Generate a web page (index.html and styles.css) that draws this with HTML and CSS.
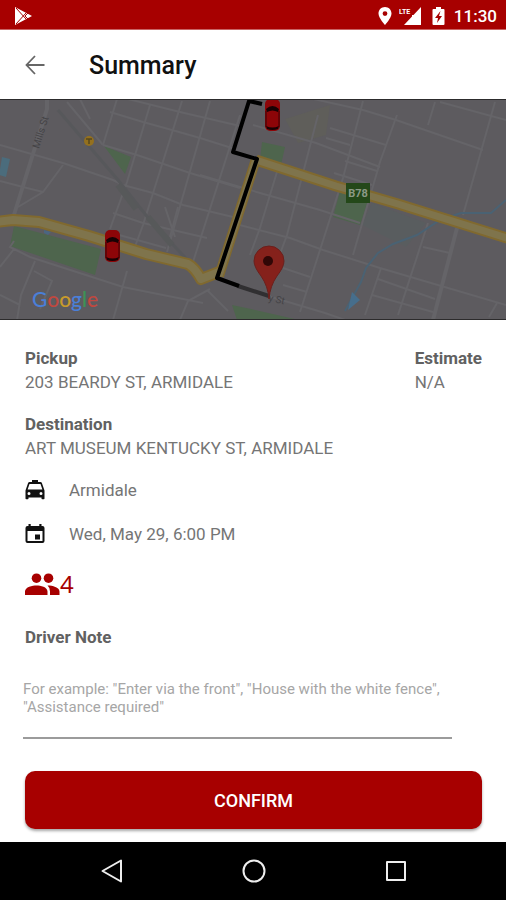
FILE: index.html
```
<!DOCTYPE html>
<html lang="en">

<head>
  <meta charset="UTF-8">
  <meta name="viewport" content="width=device-width, initial-scale=1.0">
  <title>Summary</title>
  <link rel="stylesheet" href="styles.css">
</head>

<body>
  <div class="status-bar">
    <svg width="20" height="20" viewBox="0 0 20 20">
      <path d="M1 1l17 9-17 9z" fill="#fff" />
      <path d="M2 2l10 11M2 18L12 7M14 7l-3 3 3 3" fill="none" stroke="#a70000" stroke-width="1" />
    </svg>
    <div class="status-icons">
      <svg width="14" height="20" viewBox="0 0 14 20">
        <path d="M7 1C3.400 1 .5 3.800 .5 7.500 .5 12 7 19 7 19s6.500-7 6.500-11.500C13.500 3.800 10.600 1 7 1zm0 9a2.400 2.400 0 1 1 0-4.800A2.400 2.400 0 0 1 7 10z" fill="#fff" />
      </svg>
      <svg class="signal" width="23" height="20" viewBox="0 0 23 20">
        <path d="M22 1v18H5l8-8.500V9h1.500z" fill="#fff" />
        <text x="0" y="8" class="lte">LTE</text>
      </svg>
      <svg class="battery" width="13" height="20" viewBox="0 0 13 20">
        <path d="M4 1h5v2h2.500a1 1 0 0 1 1 1v14a1 1 0 0 1-1 1h-10a1 1 0 0 1-1-1V4a1 1 0 0 1 1-1H4z" fill="#fff" />
        <path d="M8.500 5L3 12h3l-1 5 5-7H7z" fill="#a70000" />
      </svg>
      <span class="clock">11:30</span>
    </div>
  </div>

  <header class="app-bar">
    <button class="back-btn" type="button" aria-label="Back">
      <svg width="20" height="20" viewBox="0 0 20 20">
        <path d="M19.500 10H2M10 1L1.500 10l8.500 9" fill="none" stroke="#666" stroke-width="1.800" />
      </svg>
    </button>
    <h1>Summary</h1>
  </header>

  <svg class="map" viewBox="0 0 506 221" role="img" aria-label="Trip route">
    <rect width="506" height="221" fill="#5d5b5f" />

    <!-- parks and water -->
    <g fill="#4e654d">
      <path d="M14 127l87 23-6 26-85-29z" />
      <path d="M104 47l27 11-6 17z" />
      <path d="M262 43l23 5-4 18-21-5z" />
      <path d="M340 92l28 10-8 24-27-8z" />
      <path d="M232 206l19 4 48 11h-62z" />
    </g>
    <path d="M285 20l45-14-4 30-28 8z" fill="#5f5e5a" />
    <path d="M372 104l54 20-20 24-44-22z" fill="#595d5f" />
    <path d="M2 58l8 2-4 18-7-2z" fill="#4b6c7c" />
    <path d="M44 131l7 2-3 3-4-2z" fill="#4b6681" />

    <!-- side streets, west -->
    <g fill="none" stroke="#656468" stroke-width="2">
      <path d="M47 0v10L13 119" stroke-width="4" />
      <path d="M0 46l63 18 50 17 10 5 30 8 30 12 50 12" />
      <path d="M63 66L43 93l-25 15M0 82l23 6 20 5M67 3l36 43" />
      <path d="M80 0l10 20M110 13l33 10 29 8 28 8 35 11M103 46l34 10 53 18 30 9 20 6M120-2l60 15 60 14" />
      <path d="M113 114l30 10 64 15M112 134l54 15" />
      <path d="M117 0l-14 46M150 6l-23 77-17 47M182 2l-39 124-10 27M210 2l-43 151M240 16l-47 147" />
      <path d="M165 108l10 30M178 108l-8 30" />
      <path d="M14 142l-4 6 20 10 93 30 80 16M14 150L0 168M35 162l-14 34-4 25M34 172l18 10-12 28M0 196l20 10M127 172l-14 49M210 190l-22 12-8 19M208 192l20 20" />
    </g>

    <!-- side streets, east -->
    <g fill="none" stroke="#656468" stroke-width="2">
      <path d="M200 76l60 18 60 17 40 13M232 124l58 15 33 12 57 18 126 37M283 169l27 9M283 186l24 7M268 197l57 17 20 7" />
      <path d="M280 63l-20 66-10 27M318 16l-31 120-10 27M363 2l-20 77-23 72-20 62M397 16l-17 47-27 93" />
      <path d="M253 26l63 18 64 24M330 29l56 17M326 39l24 7M300-3l63 14 33 10 87 30M345 62l32 10M334 74l38 12" />
      <path d="M435 3l-7 23M440 3l66 18M495 3l-32 113M428 124l-30 92M423 148l27 6M381 169l-16 47M378 180l57 20M372 196l61 17M497 204l-8 14" />
      <path d="M457 129l-24 92" stroke-width="4" />
    </g>

    <!-- railway -->
    <path d="M58 11l60 70 35 44 50 52" fill="none" stroke="#57585b" stroke-width="3" />
    <path d="M118 86l18 24M148 118l24 28" fill="none" stroke="#57595a" stroke-width="6" />

    <!-- creek -->
    <path d="M506 101l-15 13h-30l-21 7-23 15-24 9-15 9-12 15-5 14-16 29" fill="none" stroke="#4a6273" stroke-width="2" />
    <path d="M352 193l-4 18 12-10z" fill="#466e8c" />

    <!-- main roads -->
    <g fill="none" stroke-linejoin="round">
      <path d="M-4 123l17-2 26 2 50 14 57 18 42 10q7 4 13 15l18-7" stroke="#80692f" stroke-width="12" />
      <path d="M256 60l-37 117" stroke="#80692f" stroke-width="10" />
      <path d="M256 61l80 26 62 18 112 35" stroke="#80692f" stroke-width="11" />
      <path d="M-4 123l17-2 26 2 50 14 57 18 42 10q7 4 13 15l18-7" stroke="#7f744c" stroke-width="8" />
      <path d="M256 60l-37 117" stroke="#7f744c" stroke-width="7" />
      <path d="M256 61l80 26 62 18 112 35" stroke="#7f744c" stroke-width="7" />
    </g>

    <!-- route -->
    <g fill="none" stroke-linejoin="round">
      <path d="M238 187l31 10" stroke="#302f31" stroke-width="4" />
      <path d="M262 5l-13-3-16 51 24 7-40 119 22 8" stroke="#000" stroke-width="4" />
    </g>

    <text class="street" transform="translate(39 50) rotate(-73)">Mills St</text>
    <text class="street" x="268" y="202" transform="rotate(12 268 202)">y St</text>

    <circle cx="89" cy="42" r="5" fill="#94701e" />
    <path d="M86 40h6M89 40v5" stroke="#57481f" stroke-width="1.500" />

    <rect x="346" y="84" width="24" height="20" fill="#244819" />
    <text class="shield" x="358" y="98">B78</text>

    <g id="car">
      <rect x="105" y="131" width="15" height="32" rx="5" fill="#8d0508" />
      <path d="M106 141q6.500-6 13 0l-1 3q-5.500-3-11 0zM106 158q6.500 3 13 0l-1 3q-5.500 2-11 0z" fill="#170204" />
      <path d="M106 143v16M119 143v16" stroke="#3d0305" />
    </g>
    <use href="#car" x="160" y="-131" />

    <path d="M269 200q-1-13-8-23-7-9-7-15a15 15 0 0 1 30 0q0 6-7 15-7 10-8 23z" fill="#85211b" stroke="#6b201c" />
    <circle cx="268" cy="162" r="5" fill="#300706" />

    <text class="logo" x="32" y="208"><tspan fill="#4a7fd8">G</tspan><tspan fill="#c04840">o</tspan><tspan fill="#c99b2b">o</tspan><tspan fill="#4a7fd8">g</tspan><tspan fill="#3d9355">l</tspan><tspan fill="#c04840">e</tspan></text>
    <path d="M0 .5h506M0 220.500h506" stroke="#2c2b2c" />
  </svg>

  <main class="details">
    <div class="trip-row">
      <div>
        <h2>Pickup</h2>
        <p>203 BEARDY ST, ARMIDALE</p>
      </div>
      <div class="estimate">
        <h2>Estimate</h2>
        <p>N/A</p>
      </div>
    </div>

    <div class="destination">
      <h2>Destination</h2>
      <p>ART MUSEUM KENTUCKY ST, ARMIDALE</p>
    </div>

    <div class="info-row">
      <svg width="20" height="20" viewBox="0 0 20 20">
        <path fill-rule="evenodd" d="M7 0h6v2h2.500q1 0 1.400 1L19.500 10.500v8q0 .8-.8.800h-1.400q-.8 0-.8-.8v-1h-13v1q0 .8-.8.800H1.300q-.8 0-.8-.8v-8L3.100 3q.4-1 1.400-1H7zM4.500 4L2.600 9.500h14.800L15.500 4zM4 12a1.500 1.500 0 1 0 0 3 1.500 1.500 0 0 0 0-3zm12 0a1.500 1.500 0 1 0 0 3 1.500 1.500 0 0 0 0-3z" />
      </svg>
      <span>Armidale</span>
    </div>
    <div class="info-row">
      <svg width="20" height="20" viewBox="0 0 20 20">
        <path fill-rule="evenodd" d="M3.500 0h2.200v2h8.600V0h2.200v2H17.500q2 0 2 2v13q0 2-2 2h-15q-2 0-2-2V4q0-2 2-2h1zM2.500 7v10h15V7zM10 10.500h5V15.500H10z" />
      </svg>
      <span>Wed, May 29, 6:00 PM</span>
    </div>

    <div class="passengers">
      <svg width="35" height="22" viewBox="0 0 35 22" fill="#a70000">
        <circle cx="11.500" cy="5.200" r="4.800" />
        <circle cx="23.500" cy="5.200" r="4.800" />
        <path d="M0 22v-3.500C0 14 7.500 12.500 11.500 12.500S22.500 14 22.500 18.500V22zM22.500 12.600C27 12.500 34.500 14.500 34.500 18.500V22H25v-3.500q0-3.800-2.500-5.900z" />
      </svg>
      <span>4</span>
    </div>

    <label for="note">Driver Note</label>
    <textarea id="note" rows="2" placeholder='For example: "Enter via the front", "House with the white fence", "Assistance required"'></textarea>

    <button class="confirm-btn" type="button">CONFIRM</button>
  </main>

  <nav class="nav-bar">
    <button type="button" aria-label="Back">
      <svg width="24" height="24" viewBox="0 0 24 24"><path d="M21 1.500v21L2.500 12z" /></svg>
    </button>
    <button type="button" aria-label="Home">
      <svg width="24" height="24" viewBox="0 0 24 24"><circle cx="12" cy="12" r="10.500" /></svg>
    </button>
    <button type="button" aria-label="Recent apps">
      <svg width="24" height="24" viewBox="0 0 24 24"><rect x="3" y="3" width="18" height="18" /></svg>
    </button>
  </nav>
</body>

</html>
```
FILE: styles.css
```
* {
  box-sizing: border-box;
}

body {
  font-family: Roboto, sans-serif;
  display: flex;
  flex-direction: column;
  min-height: 100vh;
  margin: 0;
  background-color: #ffffff;
  color: #757575;
}

h1,
h2,
p {
  margin: 0;
}

svg {
  display: block;
}

button {
  font-family: inherit;
  border: none;
  cursor: pointer;
}

.status-bar {
  display: flex;
  justify-content: space-between;
  align-items: center;
  height: 30px;
  padding: 2px 9px 0 14px;
  background-color: #a70000;
  border-bottom: 1px solid #c86464;
}

.status-icons {
  display: flex;
  align-items: center;
}

.signal {
  margin-left: 7px;
}

.battery {
  margin: 0 9px 0 10px;
}

.lte {
  font-size: 7px;
  font-weight: 700;
  fill: #ffffff;
}

.clock {
  font-size: 17px;
  font-weight: 500;
  color: #ffffff;
}

.app-bar {
  display: flex;
  align-items: center;
  gap: 44px;
  height: 69px;
  padding: 2px 25px 0;
}

.back-btn {
  padding: 0 0 2px;
  background: none;
}

.app-bar h1 {
  font-size: 25px;
  font-weight: 500;
  color: #111111;
}

.map {
  width: 100%;
  height: auto;
}

.street {
  font-size: 10px;
  fill: #444346;
}

.shield {
  font-size: 11px;
  font-weight: 700;
  fill: #8c9a86;
  text-anchor: middle;
}

.logo {
  font-family: Lato, sans-serif;
  font-size: 21px;
  font-weight: 500;
}

.details {
  display: flex;
  flex-direction: column;
  flex: 1;
  padding: 26px 24px 13px 25px;
  font-size: 17px;
  line-height: 24px;
}

.details h2,
.details label {
  font-size: 17px;
  font-weight: 700;
  color: #616161;
}

.trip-row {
  display: flex;
  justify-content: space-between;
}

.destination {
  margin: 18px 0;
}

.info-row {
  display: flex;
  align-items: center;
  gap: 24px;
  margin-bottom: 20px;
}

.info-row svg {
  fill: #111111;
}

.passengers {
  display: flex;
  align-items: center;
  height: 36px;
  margin-bottom: 23px;
  font-family: "Noto Sans", sans-serif;
  font-size: 24px;
  color: #a70000;
}

textarea {
  width: calc(100% - 28px);
  height: 59px;
  margin: 31px 0 32px -2px;
  padding: 0;
  border: none;
  border-bottom: 2px solid #9b9b9b;
  background: none;
  font-family: inherit;
  font-size: 15px;
  line-height: 18px;
  color: #616161;
  resize: none;
  overflow: hidden;
}

textarea::placeholder {
  color: #a6a6a6;
}

.confirm-btn {
  height: 58px;
  border-radius: 10px;
  background-color: #a70000;
  box-shadow: 0 2px 3px rgba(0, 0, 0, 0.35);
  font-size: 18px;
  font-weight: 500;
  color: #ffffff;
}

.nav-bar {
  display: flex;
  justify-content: center;
  align-items: center;
  gap: 118px;
  height: 59px;
  padding: 0 0 2px 2px;
  background-color: #000000;
}

.nav-bar button {
  padding: 0;
  background: none;
}

.nav-bar svg {
  fill: none;
  stroke: #eeeeee;
  stroke-width: 2;
  stroke-linejoin: round;
}
```
